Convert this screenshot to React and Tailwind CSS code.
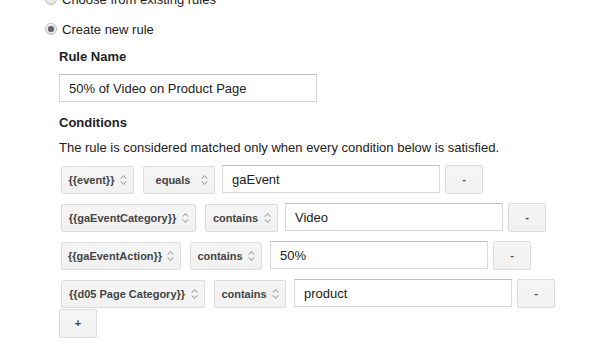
import React from "react";

function Chevrons() {
  return (
    <svg width="7" height="12" viewBox="0 0 7 12" className="shrink-0">
      <path d="M0.8 4.6 L3.5 1.6 L6.2 4.6" fill="none" stroke="#8a8a8a" strokeWidth="1" />
      <path d="M0.8 7.4 L3.5 10.4 L6.2 7.4" fill="none" stroke="#8a8a8a" strokeWidth="1" />
    </svg>
  );
}

function Select({ label, w }) {
  return (
    <div
      className={`mt-[1px] flex h-[28px] shrink-0 items-center gap-[5px] rounded-[2px] border border-[#dcdcdc] bg-gradient-to-b from-[#f5f5f5] to-[#f1f1f1] pl-[6px] pr-[6px] text-[11px] font-bold text-[#444] ${w}`}
    >
      <span className="flex-1 whitespace-nowrap text-center">{label}</span>
      <Chevrons />
    </div>
  );
}

function Btn({ label, extra = "" }) {
  return (
    <div
      className={`flex h-[29px] w-[38px] shrink-0 items-center justify-center rounded-[2px] border border-[#dcdcdc] bg-gradient-to-b from-[#f5f5f5] to-[#f1f1f1] text-[11px] font-bold text-[#444] ${extra}`}
    >
      {label}
    </div>
  );
}

function Row({ a, aw, g1, b, bw, g2, value }) {
  return (
    <div className="ml-[2px] flex h-[29px] items-start">
      <Select label={a} w={aw} />
      <div className={`shrink-0 ${g1}`} />
      <Select label={b} w={bw} />
      <div className={`shrink-0 ${g2}`} />
      <div className="flex h-[28px] w-[218px] shrink-0 items-center border border-[#d9d9d9] border-t-[#c0c0c0] bg-white pl-[9px] text-[13px] text-[#222]">
        {value}
      </div>
      <div className="w-[5px] shrink-0" />
      <Btn label="-" />
    </div>
  );
}

function Radio({ checked }) {
  return (
    <div className="flex h-[12px] w-[12px] shrink-0 items-center justify-center rounded-full border border-[#b9b9b9] bg-gradient-to-b from-[#f8f8f8] to-[#e4e4e4]">
      {checked && <div className="h-[6px] w-[6px] rounded-full bg-[#666] shadow-[0_0_1px_#888]" />}
    </div>
  );
}

export default function App() {
  return (
    <div className="h-[347px] w-[594px] overflow-hidden bg-white font-['Liberation_Sans',Arial,sans-serif] text-[13px] leading-[15px] text-[#222]">
      <div className="-mt-[16px]">
        <div className="flex h-[30px] items-center gap-[5px] pl-[45px]">
          <Radio />
          <span>Choose from existing rules</span>
        </div>
        <div className="flex h-[30px] items-center gap-[5px] pl-[45px]">
          <Radio checked />
          <span>Create new rule</span>
        </div>
        <div className="pl-[59px]">
          <div className="mt-[5px] font-bold">Rule Name</div>
          <div className="mt-[10px] flex h-[28px] w-[258px] items-center border border-[#d9d9d9] border-t-[#c0c0c0] bg-white pl-[9px]">
            50% of Video on Product Page
          </div>
          <div className="mt-[13px] font-bold">Conditions</div>
          <div className="mt-[10px]">
            The rule is considered matched only when every condition below is satisfied.
          </div>
          <div className="mt-[10px] flex flex-col gap-[9px]">
            <Row a="{{event}}" aw="w-[73px]" g1="w-[9px]" b="equals" bw="w-[72px]" g2="w-[7px]" value="gaEvent" />
            <Row a="{{gaEventCategory}}" aw="w-[135px]" g1="w-[9px]" b="contains" bw="w-[73px]" g2="w-[7px]" value="Video" />
            <Row a="{{gaEventAction}}" aw="w-[120px]" g1="w-[9px]" b="contains" bw="w-[72px]" g2="w-[8px]" value="50%" />
            <Row a="{{d05 Page Category}}" aw="w-[144px]" g1="w-[9px]" b="contains" bw="w-[72px]" g2="w-[8px]" value="product" />
          </div>
          <Btn label="+" extra="mt-[1px]" />
        </div>
      </div>
    </div>
  );
}
